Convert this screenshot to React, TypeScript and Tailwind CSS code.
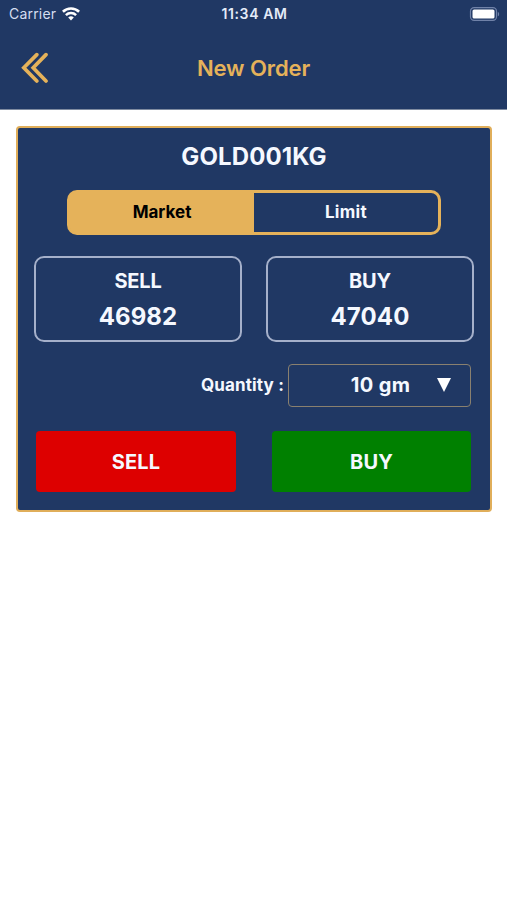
import { useState } from "react";

const quotes = [
  { label: "SELL", price: "46982" },
  { label: "BUY", price: "47040" },
];

export default function App() {
  const [orderType, setOrderType] = useState("Market");

  return (
    <div className="min-h-screen w-full bg-white font-['Inter',sans-serif] text-[#f5f8ff]">
      <header className="h-[110px] border-b border-[#7f8ba0] bg-[#203864]">
        <div className="grid h-[27px] grid-cols-[1fr_80px_1fr] items-center pr-[7px] pl-[9px]">
          <div className="flex items-center gap-[6px]">
            <span className="text-[14px] tracking-[0.2px] text-[#d5def0]">Carrier</span>
            <WifiIcon className="h-[14px] w-[18px]" />
          </div>
          <span className="text-center text-[14px] font-semibold tracking-[0.6px] whitespace-nowrap text-[#e4ebf8]">
            11:34 AM
          </span>
          <BatteryIcon className="h-[14px] w-[31px] justify-self-end" />
        </div>
        <div className="grid h-[82px] grid-cols-[80px_1fr_80px] items-center">
          <button className="ml-[20px] w-[30px]" aria-label="Back">
            <BackIcon className="h-[32px] w-[30px]" />
          </button>
          <h1 className="text-center text-[22px] font-semibold tracking-[-0.1px] text-[#e5b25a]">
            New Order
          </h1>
        </div>
      </header>

      <main className="px-4 pt-4">
        <section className="h-[386px] w-[476px] rounded-[4px] border-2 border-[#e0ae5a] bg-[#203864]">
          <h2 className="flex h-[58px] items-center justify-center text-[24px] font-bold tracking-[0.1px]">
            GOLD001KG
          </h2>

          <div className="mx-[49px] mt-1 grid h-[45px] w-[374px] grid-cols-2 rounded-[10px] border-[3px] border-[#e5b25a]">
            {["Market", "Limit"].map((type) => (
              <button
                key={type}
                onClick={() => setOrderType(type)}
                className={
                  orderType === type
                    ? "rounded-[4px] bg-[#e5b25a] text-[17px] font-bold text-black first:rounded-r-none last:rounded-l-none"
                    : "text-[17px] font-bold tracking-[0.3px]"
                }
              >
                {type}
              </button>
            ))}
          </div>

          <div className="mx-4 mt-[21px] flex justify-between">
            {quotes.map((quote) => (
              <div
                key={quote.label}
                className="flex h-[86px] w-[208px] flex-col items-center rounded-[10px] border-2 border-[#a5b0ca] pt-[7px] font-bold"
              >
                <span className="text-[20px] leading-[32px] tracking-[-0.2px]">{quote.label}</span>
                <span className="mt-px text-[24px] leading-[38px] tracking-[0.1px]">
                  {quote.price}
                </span>
              </div>
            ))}
          </div>

          <div className="mt-[22px] mr-[19px] flex items-center justify-end gap-1">
            <span className="text-[17px] font-bold tracking-[0.15px]">Quantity :</span>
            <button className="grid h-[43px] w-[183px] grid-cols-[1fr_24px] items-center rounded-[4px] border border-[#89806f] pr-[14px] pb-px pl-[40px] text-[20px] font-bold tracking-[0.4px]">
              <span>10 gm</span>
              <svg viewBox="0 0 14 14" className="h-[14px] w-[14px] justify-self-center" fill="white">
                <path d="M0 0h14L7 14z" />
              </svg>
            </button>
          </div>

          <div className="mt-6 mr-[19px] ml-[18px] flex justify-between text-[20px] font-bold tracking-[0.1px]">
            <button className="h-[61px] w-[200px] rounded-[4px] bg-[#dd0000]">SELL</button>
            <button className="h-[61px] w-[199px] rounded-[4px] bg-[#008000]">BUY</button>
          </div>
        </section>
      </main>
    </div>
  );
}

function WifiIcon(props: any) {
  return (
    <svg {...props} viewBox="0 0 18 14" fill="white">
      <path d="M9 13.4 6.2 10.6a4 4 0 0 1 5.6 0z" />
      <path d="M3.9 8.2a7.3 7.3 0 0 1 10.2 0" fill="none" stroke="white" strokeWidth="2.5" />
      <path d="M.9 4.8a11.7 11.7 0 0 1 16.2 0" fill="none" stroke="white" strokeWidth="2.6" />
    </svg>
  );
}

function BatteryIcon(props: any) {
  return (
    <svg {...props} viewBox="0 0 31 14">
      <rect x="1.5" y=".6" width="26" height="12.8" rx="3.6" fill="none" stroke="#7082a8" strokeWidth="1.2" />
      <rect x="3.5" y="2.5" width="22" height="9" rx="1.6" fill="white" />
      <path d="M28.8 5v4.2c1.8-.5 1.8-3.7 0-4.2z" fill="#7082a8" />
    </svg>
  );
}

function BackIcon(props: any) {
  return (
    <svg
      {...props}
      viewBox="0 0 30 32"
      fill="none"
      stroke="#e5b25a"
      strokeWidth="3.7"
      strokeLinecap="round"
      strokeLinejoin="miter"
    >
      <path d="M16.8 2.6 3.8 15.8l13 13.2" />
      <path d="M26 2.6 13.2 15.8 26 29" />
    </svg>
  );
}
